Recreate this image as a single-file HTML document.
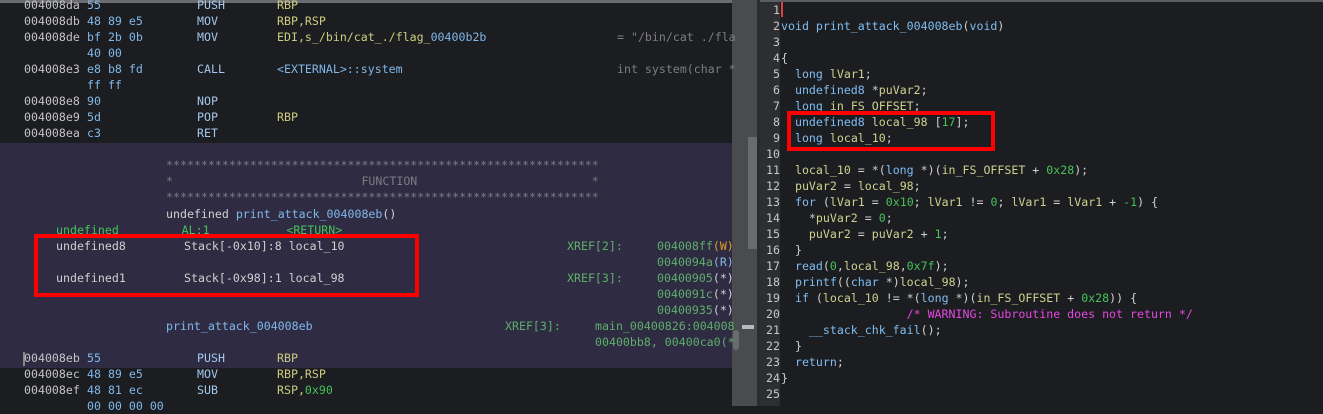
<!DOCTYPE html>
<html><head><meta charset="utf-8"><style>
*{margin:0;padding:0;box-sizing:border-box}
body{width:1323px;height:406px;overflow:hidden;background:#1c1d20;position:relative;font-family:"DejaVu Sans Mono","Liberation Mono",monospace;font-size:11.6px}
.t{position:absolute;white-space:pre;line-height:16px;height:16px}
.a{color:#c4c4c4}.b{color:#80b8ea}.m{color:#a2c8ee}.o{color:#cccc80}.g{color:#5fae6a}.c{color:#7c7c84}.w{color:#d0d0d0}.n{color:#46c25a}.y{color:#e0a020}
.k{color:#80bcf0}.v{color:#d0d090}.p{color:#e448e0}
.ln{position:absolute;left:760px;width:20px;text-align:right;color:#c8c8c8;line-height:16px;height:16px}
</style></head><body>
<div style="position:absolute;left:0;top:0;width:732px;height:3px;background:#6a6c70"></div>
<div style="position:absolute;left:0;top:143px;width:732px;height:225px;background:#2e2b42"></div>
<div style="position:absolute;left:732px;top:0;width:25px;height:406px;background:#4a4b4e"></div>
<div style="position:absolute;left:748px;top:137px;width:9px;height:112px;background:#6a6b6e"></div>
<div style="position:absolute;left:742px;top:325px;width:12px;height:4px;background:#b8b8c0"></div>
<div style="position:absolute;left:733px;top:330px;width:6px;height:20px;background:#6a6b6e;border-radius:3px"></div>
<div style="position:absolute;left:757px;top:0;width:3px;height:406px;background:#2a2b2e"></div>
<div style="position:absolute;left:760px;top:0;width:20px;height:406px;background:#2c2e32"></div>
<div style="position:absolute;left:760px;top:0;width:563px;height:2px;background:#5a5c60"></div>
<div style="position:absolute;left:781px;top:2px;width:2px;height:15px;background:#e04040"></div>

<!-- left listing -->
<div class="t a" style="left:24px;top:-3px">004008da</div><div class="t b" style="left:87px;top:-3px">55</div><div class="t m" style="left:197px;top:-3px">PUSH</div><div class="t o" style="left:277px;top:-3px">RBP</div>
<div class="t a" style="left:24px;top:13px">004008db</div><div class="t b" style="left:87px;top:13px">48 89 e5</div><div class="t m" style="left:197px;top:13px">MOV</div><div class="t o" style="left:277px;top:13px">RBP,RSP</div>
<div class="t a" style="left:24px;top:29px">004008de</div><div class="t b" style="left:87px;top:29px">bf 2b 0b</div><div class="t m" style="left:197px;top:29px">MOV</div><div class="t o" style="left:277px;top:29px">EDI,s_/bin/cat_./flag_<span class="b">00400b2b</span></div><div class="t c" style="left:617px;top:29px">= "/bin/cat ./fla</div>
<div class="t b" style="left:87px;top:45px">40 00</div>
<div class="t a" style="left:24px;top:61px">004008e3</div><div class="t b" style="left:87px;top:61px">e8 b8 fd</div><div class="t m" style="left:197px;top:61px">CALL</div><div class="t b" style="left:277px;top:61px">&lt;EXTERNAL&gt;::system</div><div class="t c" style="left:617px;top:61px">int system(char *</div>
<div class="t b" style="left:87px;top:77px">ff ff</div>
<div class="t a" style="left:24px;top:93px">004008e8</div><div class="t b" style="left:87px;top:93px">90</div><div class="t m" style="left:197px;top:93px">NOP</div>
<div class="t a" style="left:24px;top:109px">004008e9</div><div class="t b" style="left:87px;top:109px">5d</div><div class="t m" style="left:197px;top:109px">POP</div><div class="t o" style="left:277px;top:109px">RBP</div>
<div class="t a" style="left:24px;top:125px">004008ea</div><div class="t b" style="left:87px;top:125px">c3</div><div class="t m" style="left:197px;top:125px">RET</div>

<div class="t c" style="left:166px;top:157px">**************************************************************</div>
<div class="t c" style="left:166px;top:173px">*                           FUNCTION                         *</div>
<div class="t c" style="left:166px;top:189px">**************************************************************</div>
<div class="t w" style="left:166px;top:206px">undefined <span class="b">print_attack_004008eb</span>()</div>
<div class="t n" style="left:56px;top:222px">undefined         AL:1           &lt;RETURN&gt;</div>
<div class="t w" style="left:56px;top:238px">undefined8</div><div class="t w" style="left:184px;top:238px">Stack[-0x10]:8 local_10</div>
<div class="t g" style="left:567px;top:238px">XREF[2]:</div><div class="t g" style="left:657px;top:238px">004008ff<span class="y">(W)</span></div>
<div class="t g" style="left:657px;top:254px">0040094a<span class="b">(R)</span></div>
<div class="t w" style="left:56px;top:270px">undefined1</div><div class="t w" style="left:184px;top:270px">Stack[-0x98]:1 local_98</div>
<div class="t g" style="left:567px;top:270px">XREF[3]:</div><div class="t g" style="left:657px;top:270px">00400905<span class="w">(*)</span></div>
<div class="t g" style="left:657px;top:286px">0040091c<span class="w">(*)</span></div>
<div class="t g" style="left:657px;top:302px">00400935<span class="w">(*)</span></div>
<div class="t b" style="left:166px;top:318px">print_attack_004008eb</div><div class="t g" style="left:505px;top:318px">XREF[3]:</div><div class="t g" style="left:595px;top:318px">main_00400826:004008</div>
<div class="t g" style="left:595px;top:334px">00400bb8, 00400ca0(*</div>
<div style="position:absolute;left:23px;top:352px;width:2px;height:14px;background:#888"></div>
<div class="t a" style="left:24px;top:350px">004008eb</div><div class="t b" style="left:87px;top:350px">55</div><div class="t m" style="left:197px;top:350px">PUSH</div><div class="t o" style="left:277px;top:350px">RBP</div>
<div class="t a" style="left:24px;top:366px">004008ec</div><div class="t b" style="left:87px;top:366px">48 89 e5</div><div class="t m" style="left:197px;top:366px">MOV</div><div class="t o" style="left:277px;top:366px">RBP,RSP</div>
<div class="t a" style="left:24px;top:382px">004008ef</div><div class="t b" style="left:87px;top:382px">48 81 ec</div><div class="t m" style="left:197px;top:382px">SUB</div><div class="t o" style="left:277px;top:382px">RSP,<span class="n">0x90</span></div>
<div class="t b" style="left:87px;top:398px">00 00 00 00</div>
<div style="position:absolute;left:34px;top:234px;width:385px;height:63px;border:4px solid #f00"></div>

<!-- right decompiler -->
<div class="ln" style="top:2px">1</div><div class="ln" style="top:18px">2</div><div class="ln" style="top:34px">3</div><div class="ln" style="top:50px">4</div><div class="ln" style="top:66px">5</div><div class="ln" style="top:82px">6</div><div class="ln" style="top:98px">7</div><div class="ln" style="top:114px">8</div><div class="ln" style="top:130px">9</div><div class="ln" style="top:146px">10</div><div class="ln" style="top:162px">11</div><div class="ln" style="top:178px">12</div><div class="ln" style="top:194px">13</div><div class="ln" style="top:210px">14</div><div class="ln" style="top:226px">15</div><div class="ln" style="top:242px">16</div><div class="ln" style="top:258px">17</div><div class="ln" style="top:274px">18</div><div class="ln" style="top:290px">19</div><div class="ln" style="top:306px">20</div><div class="ln" style="top:322px">21</div><div class="ln" style="top:338px">22</div><div class="ln" style="top:354px">23</div><div class="ln" style="top:370px">24</div><div class="ln" style="top:386px">25</div>
<div class="t w" style="left:781px;top:18px"><span class="k">void</span> <span class="k">print_attack_004008eb</span>(<span class="k">void</span>)</div>
<div class="t w" style="left:781px;top:50px">{</div>
<div class="t w" style="left:781px;top:66px">  <span class="k">long</span> <span class="v">lVar1</span>;</div>
<div class="t w" style="left:781px;top:82px">  <span class="k">undefined8</span> *<span class="v">puVar2</span>;</div>
<div class="t w" style="left:781px;top:98px">  <span class="k">long</span> <span class="v">in_FS_OFFSET</span>;</div>
<div class="t w" style="left:781px;top:114px">  <span class="k">undefined8</span> <span class="v">local_98</span> [<span class="n">17</span>];</div>
<div class="t w" style="left:781px;top:130px">  <span class="k">long</span> <span class="v">local_10</span>;</div>
<div class="t w" style="left:781px;top:162px">  <span class="v">local_10</span> = *(<span class="k">long</span> *)(<span class="v">in_FS_OFFSET</span> + <span class="n">0x28</span>);</div>
<div class="t w" style="left:781px;top:178px">  <span class="v">puVar2</span> = <span class="v">local_98</span>;</div>
<div class="t w" style="left:781px;top:194px">  <span class="k">for</span> (<span class="v">lVar1</span> = <span class="n">0x10</span>; <span class="v">lVar1</span> != <span class="n">0</span>; <span class="v">lVar1</span> = <span class="v">lVar1</span> + <span class="n">-1</span>) {</div>
<div class="t w" style="left:781px;top:210px">    *<span class="v">puVar2</span> = <span class="n">0</span>;</div>
<div class="t w" style="left:781px;top:226px">    <span class="v">puVar2</span> = <span class="v">puVar2</span> + <span class="n">1</span>;</div>
<div class="t w" style="left:781px;top:242px">  }</div>
<div class="t w" style="left:781px;top:258px">  <span class="k">read</span>(<span class="n">0</span>,<span class="v">local_98</span>,<span class="n">0x7f</span>);</div>
<div class="t w" style="left:781px;top:274px">  <span class="k">printf</span>((<span class="k">char</span> *)<span class="v">local_98</span>);</div>
<div class="t w" style="left:781px;top:290px">  <span class="k">if</span> (<span class="v">local_10</span> != *(<span class="k">long</span> *)(<span class="v">in_FS_OFFSET</span> + <span class="n">0x28</span>)) {</div>
<div class="t p" style="left:781px;top:306px">                  /* WARNING: Subroutine does not return */</div>
<div class="t w" style="left:781px;top:322px">    <span class="k">__stack_chk_fail</span>();</div>
<div class="t w" style="left:781px;top:338px">  }</div>
<div class="t w" style="left:781px;top:354px">  <span class="k">return</span>;</div>
<div class="t w" style="left:781px;top:370px">}</div>
<div style="position:absolute;left:787px;top:111px;width:208px;height:40px;border:4px solid #f00"></div>
</body></html>
